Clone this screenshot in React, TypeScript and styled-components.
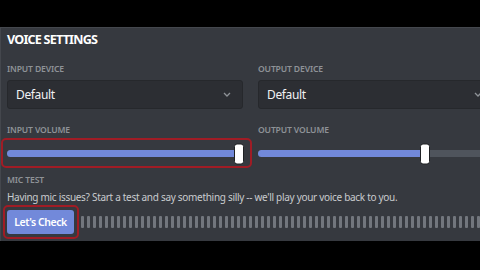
import React from 'react'
import styled, { createGlobalStyle } from 'styled-components'

const GlobalStyle = createGlobalStyle`
  html, body {
    margin: 0;
    padding: 0;
    background: #000;
  }
  body {
    width: 480px;
    height: 270px;
    overflow: hidden;
    font-family: 'Noto Sans', 'Open Sans', sans-serif;
  }
`

const Screen = styled.div`
  width: 480px;
  height: 270px;
  padding-top: 27px;
  box-sizing: border-box;
  background: #000;
  overflow: hidden;
`

const Panel = styled.section`
  height: 214px;
  box-sizing: border-box;
  padding: 4px 0 0 6px;
  background: #36393f;
  border-top: 1px solid #44474d;
  border-left: 1px solid #44474d;
  overflow: hidden;
`

const Title = styled.h2`
  margin: 0;
  font-size: 12.6px;
  line-height: 16px;
  font-weight: 700;
  letter-spacing: -0.8px;
  color: #fff;
`

const Grid = styled.div`
  display: grid;
  grid-template-columns: 236px 236px;
  column-gap: 15px;
  row-gap: 15px;
  margin-top: 15px;
`

const Field = styled.div`
  display: flex;
  flex-direction: column;
`

const Label = styled.div`
  font-size: 8.6px;
  line-height: 12px;
  font-weight: 600;
  letter-spacing: -0.15px;
  color: #8e9297;
  text-transform: uppercase;
`

const Select = styled.div`
  margin-top: 5px;
  height: 29px;
  box-sizing: border-box;
  display: flex;
  align-items: center;
  justify-content: space-between;
  padding: 0 11px 0 8px;
  background: #2c2e33;
  border: 1px solid #26282c;
  border-radius: 3px;
  color: #f1f2f3;
  font-size: 12px;
  letter-spacing: -0.35px;
`

const Chevron = styled.svg`
  width: 8px;
  height: 5px;
`

const SliderBox = styled.div`
  position: relative;
  margin-top: 2px;
  height: 31px;
  display: flex;
  align-items: center;
  padding-right: 4px;
`

const Track = styled.div`
  position: relative;
  flex: 1;
  height: 7px;
  border-radius: 4px;
  background: #4f545c;
`

const Fill = styled.div<{ $pct: number }>`
  width: ${p => p.$pct}%;
  height: 100%;
  border-radius: 4px;
  background: #7289da;
`

const Handle = styled.div<{ $pct: number }>`
  position: absolute;
  top: 50%;
  left: ${p => p.$pct}%;
  width: 8px;
  height: 19px;
  transform: translate(-50%, -50%);
  background: #fff;
  border: 1px solid #202225;
  border-radius: 3px;
`

const Highlight = styled.div<{ $t: number; $r: number; $b: number; $l: number }>`
  position: absolute;
  top: ${p => p.$t}px;
  right: ${p => p.$r}px;
  bottom: ${p => p.$b}px;
  left: ${p => p.$l}px;
  border: 2px solid #a01c25;
  border-radius: 5px;
  pointer-events: none;
`

const MicTest = styled.div`
  margin-top: 5px;
`

const Description = styled.div`
  margin-top: 4px;
  font-size: 10px;
  line-height: 14px;
  letter-spacing: -0.3px;
  color: #c9cbce;
  white-space: nowrap;
`

const TestRow = styled.div`
  margin-top: 5px;
  display: flex;
  align-items: center;
  gap: 7px;
`

const ButtonWrap = styled.div`
  position: relative;
`

const CheckButton = styled.button`
  width: 67px;
  height: 24px;
  border: none;
  border-radius: 3px;
  background: #7289da;
  color: #fff;
  font-family: inherit;
  font-size: 10.5px;
  font-weight: 600;
  letter-spacing: -0.45px;
  padding: 0;
`

const Bars = styled.div`
  display: flex;
  gap: 3px;
`

const Bar = styled.div`
  flex: none;
  width: 3px;
  height: 12px;
  border-radius: 1px;
  background: #72767d;
`

const Dropdown: React.FC<{ value: string }> = ({ value }) => (
  <Select>
    <span>{value}</span>
    <Chevron viewBox="0 0 8 5">
      <polyline points="1,1 4,4 7,1" fill="none" stroke="#8e9297" strokeWidth="1.3" />
    </Chevron>
  </Select>
)

const Slider: React.FC<{ pct: number; marked?: boolean }> = ({ pct, marked }) => (
  <SliderBox>
    <Track>
      <Fill $pct={pct} />
      <Handle $pct={pct} />
    </Track>
    {marked && <Highlight $t={0} $r={-9} $b={1} $l={-6} />}
  </SliderBox>
)

const App: React.FC = () => {
  const bars = Array.from({ length: 70 })

  return (
    <Screen>
      <GlobalStyle />
      <Panel>
        <Title>VOICE SETTINGS</Title>
        <Grid>
          <Field>
            <Label>Input Device</Label>
            <Dropdown value="Default" />
          </Field>
          <Field>
            <Label>Output Device</Label>
            <Dropdown value="Default" />
          </Field>
          <Field>
            <Label>Input Volume</Label>
            <Slider pct={100} marked />
          </Field>
          <Field>
            <Label>Output Volume</Label>
            <Slider pct={72} />
          </Field>
        </Grid>
        <MicTest>
          <Label>Mic Test</Label>
          <Description>
            Having mic issues? Start a test and say something silly -- we'll play your voice back to you.
          </Description>
          <TestRow>
            <ButtonWrap>
              <CheckButton>Let's Check</CheckButton>
              <Highlight $t={-4} $r={-5} $b={-5} $l={-4} />
            </ButtonWrap>
            <Bars>
              {bars.map((_, i) => (
                <Bar key={i} />
              ))}
            </Bars>
          </TestRow>
        </MicTest>
      </Panel>
    </Screen>
  )
}

export default App
